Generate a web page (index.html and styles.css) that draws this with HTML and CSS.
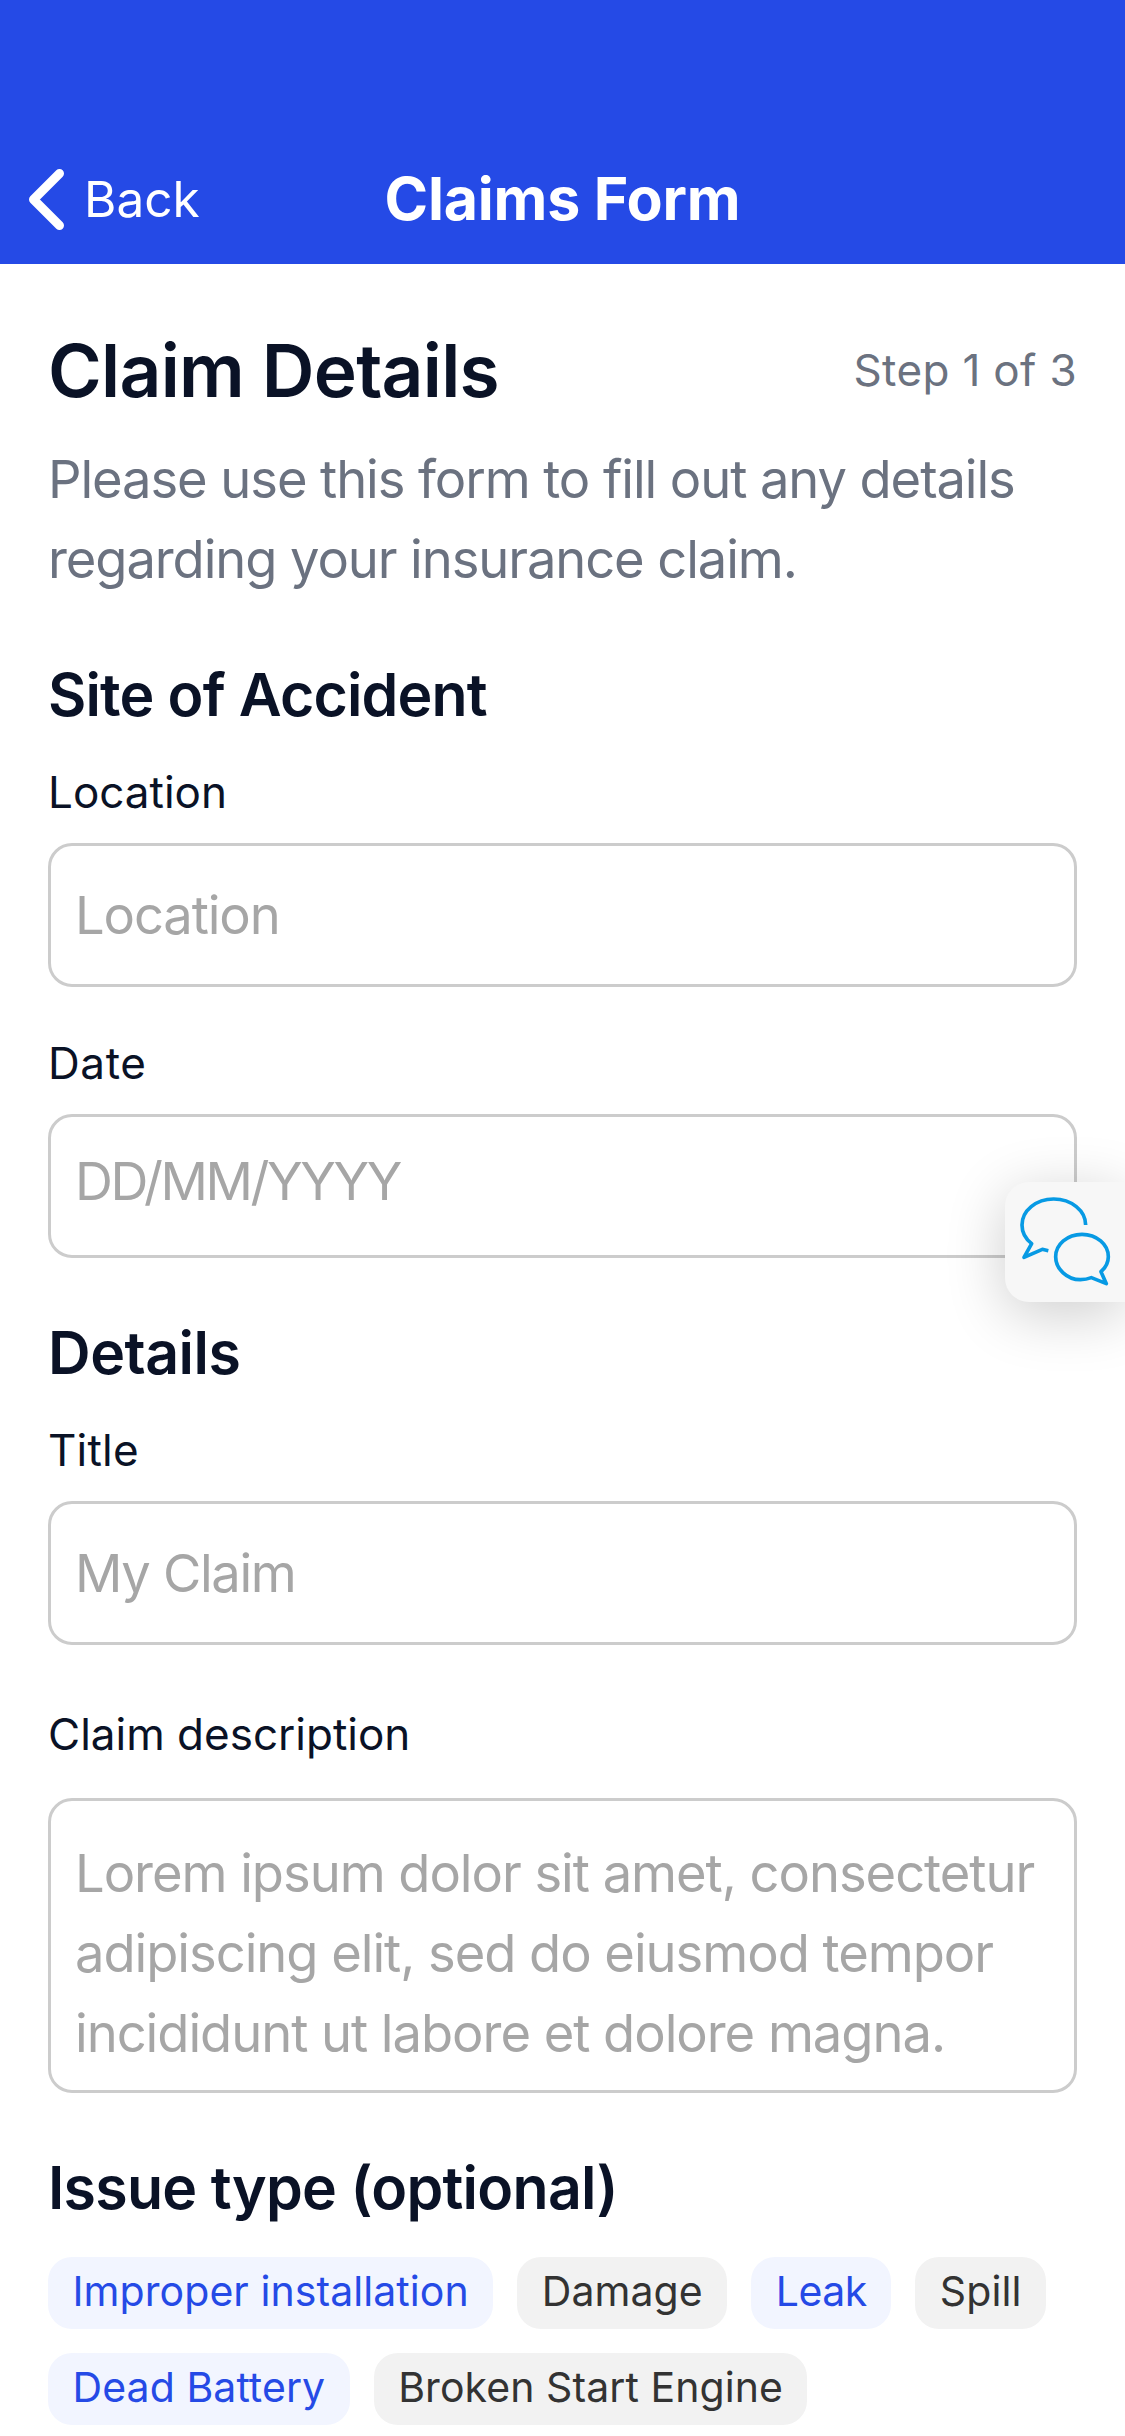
FILE: index.html
```html
<!DOCTYPE html>
<html lang="en">
<head>
  <meta charset="utf-8">
  <title>Claims Form</title>
  <link rel="stylesheet" href="styles.css">
</head>
<body>
  <header class="navbar">
    <a class="back">
      <svg class="back-icon" viewBox="0 0 35 61" fill="none" stroke="#fff" stroke-width="9" stroke-linecap="round" stroke-linejoin="round"><path d="M30.5 4.5 4.5 30.5l26 26"/></svg>
      <span>Back</span>
    </a>
    <h1 class="navbar-title">Claims Form</h1>
  </header>

  <main class="form">
    <div class="form-head">
      <h2 class="form-title">Claim Details</h2>
      <span class="step">Step 1 of 3</span>
    </div>
    <p class="intro">Please use this form to fill out any details regarding your insurance claim.</p>

    <section class="section">
      <h3 class="section-title">Site of Accident</h3>
      <div class="field">
        <label class="label" for="location">Location</label>
        <input class="input" id="location" placeholder="Location">
      </div>
      <div class="field">
        <label class="label label-date" for="date">Date</label>
        <input class="input input-date" id="date" placeholder="DD/MM/YYYY">
      </div>
    </section>

    <section class="section">
      <h3 class="section-title section-title-wide">Details</h3>
      <div class="field">
        <label class="label label-title" for="title">Title</label>
        <input class="input input-title" id="title" placeholder="My Claim">
      </div>
      <div class="field field-area">
        <label class="label" for="description">Claim description</label>
        <textarea class="input textarea" id="description" placeholder="Lorem ipsum dolor sit amet, consectetur adipiscing elit, sed do eiusmod tempor incididunt ut labore et dolore magna."></textarea>
      </div>
    </section>

    <section class="section">
      <h3 class="section-title section-title-issue">Issue type (optional)</h3>
      <div class="chips">
        <span class="chip chip-on">Improper installation</span>
        <span class="chip">Damage</span>
        <span class="chip chip-on chip-tight">Leak</span>
        <span class="chip">Spill</span>
        <span class="chip chip-on">Dead Battery</span>
        <span class="chip">Broken Start Engine</span>
      </div>
    </section>
  </main>

  <button class="chat" type="button" aria-label="Chat">
    <svg class="chat-icon" viewBox="0 0 360 360" fill="none" stroke="#079ae4" stroke-width="11" stroke-linejoin="round">
      <path d="M242 129C242 86 199 51 146 51S51 86 51 129C51 151 62 171 80 185L57 226 112 202 130 206"/>
      <path d="M288 269C302 256 310 241 310 224C310 187 275 157 231 157S152 187 152 224S187 293 226 293C238 293 249 291 259 287L304 305Z"/>
    </svg>
  </button>
</body>
</html>
```
FILE: styles.css
```css
* {
  box-sizing: border-box;
}

body {
  position: relative;
  margin: 0;
  height: 2436px;
  overflow: hidden;
  background: #fff;
  color: #0a1226;
  font-family: Inter, "Liberation Sans", sans-serif;
}

h1, h2, h3, p {
  margin: 0;
}

.navbar {
  display: grid;
  grid-template-columns: 1fr auto 1fr;
  align-items: center;
  height: 264px;
  padding: 134px 29px 0;
  background: #254ae6;
  color: #fff;
}

.back {
  display: flex;
  align-items: center;
  gap: 20px;
  font-size: 49.5px;
  line-height: 60px;
}

.back-icon {
  width: 35px;
  height: 61px;
}

.navbar-title {
  font-size: 59px;
  font-weight: 700;
  line-height: 72px;
  letter-spacing: -0.2px;
}

.form {
  padding: 61px 48px 0;
}

.form-head {
  display: flex;
  align-items: center;
  justify-content: space-between;
  height: 90px;
}

.form-title {
  font-size: 73px;
  font-weight: 600;
  letter-spacing: -0.72px;
}

.step {
  color: #6b7280;
  font-size: 44px;
  letter-spacing: 0.35px;
}

.intro {
  margin: 24px 0 1px;
  color: #6b7280;
  font-size: 52.5px;
  line-height: 80px;
  letter-spacing: -1.09px;
}

.section {
  padding-top: 53px;
}

.section-title {
  margin-bottom: 25px;
  font-size: 59px;
  font-weight: 600;
  line-height: 84px;
  letter-spacing: -0.85px;
}

.section-title-wide {
  letter-spacing: -0.48px;
}

.section-title-issue {
  margin-bottom: 27px;
  letter-spacing: -0.73px;
}

.field {
  display: flex;
  flex-direction: column;
  gap: 21px;
}

.field + .field {
  margin-top: 46px;
}

.field + .field-area {
  gap: 34px;
  margin-top: 59px;
}

.label {
  font-size: 44px;
  line-height: 60px;
}

.label-date {
  letter-spacing: 0.6px;
}

.label-title {
  letter-spacing: 0.2px;
}

.input {
  width: 100%;
  height: 144px;
  margin: 0;
  padding: 0 24px;
  border: 3px solid #ccc;
  border-radius: 24px;
  background: transparent;
  color: inherit;
  font: inherit;
  font-size: 52.5px;
  letter-spacing: -1.12px;
}

.input::placeholder {
  color: #a6a6a6;
  opacity: 1;
}

.input-date {
  padding-bottom: 10px;
  letter-spacing: -2.4px;
}

.input-title {
  letter-spacing: -1.35px;
}

.textarea {
  display: block;
  height: 295px;
  padding: 32px 24px 0;
  line-height: 80px;
  letter-spacing: -1.04px;
  resize: none;
  overflow: hidden;
}

.chips {
  display: flex;
  flex-wrap: wrap;
  gap: 24px;
}

.chip {
  height: 72px;
  padding: 0 24.5px;
  border-radius: 24px;
  background: #f2f2f2;
  color: #333;
  font-size: 41px;
  line-height: 69px;
  letter-spacing: 0.07px;
  white-space: nowrap;
}

.chip-on {
  background: #f2f5ff;
  color: #254ae6;
}

.chip-tight {
  letter-spacing: -0.5px;
}

/* Chat tab pinned over the right edge of the form */
.chat {
  position: absolute;
  top: 1182px;
  right: 0;
  width: 120px;
  height: 120px;
  padding: 0;
  border: 0;
  border-radius: 24px 0 0 24px;
  background: #f7f7f7;
  box-shadow: 0 12px 60px rgba(0, 0, 0, 0.2);
}

.chat-icon {
  display: block;
  width: 120px;
  height: 120px;
}
```
